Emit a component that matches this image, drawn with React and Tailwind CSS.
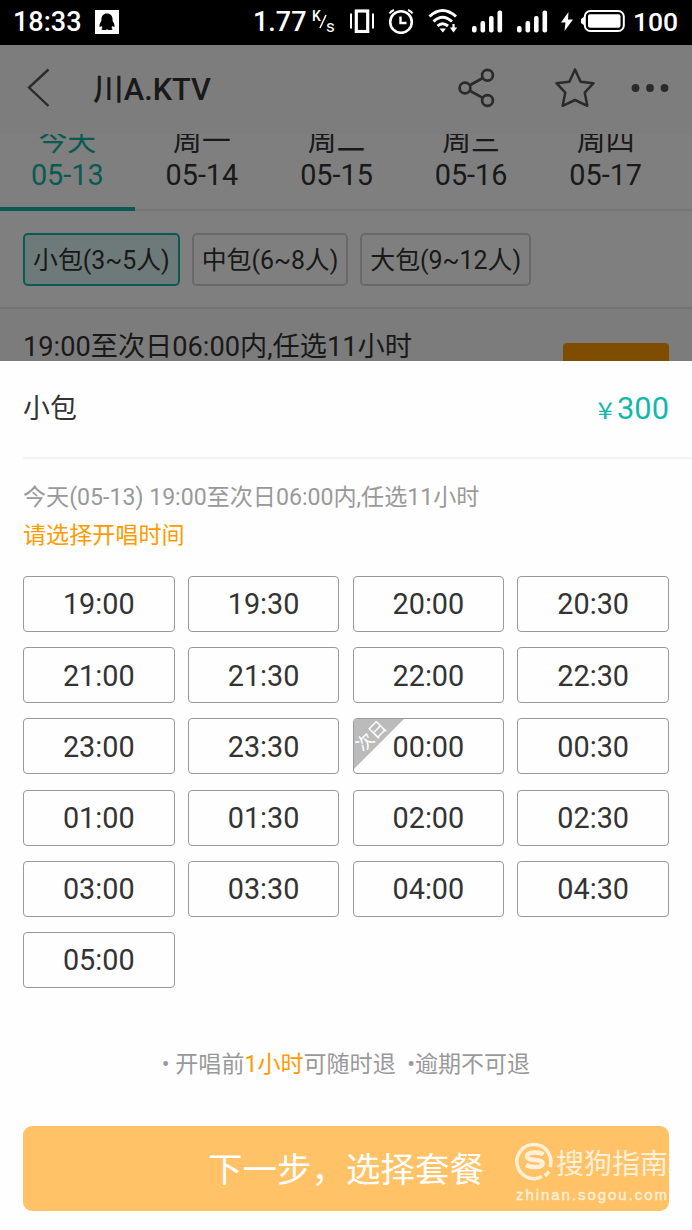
import React, { useState } from 'react';

const DAYS = [
    { label: '今天', date: '05-13' },
    { label: '周一', date: '05-14' },
    { label: '周二', date: '05-15' },
    { label: '周三', date: '05-16' },
    { label: '周四', date: '05-17' }
];

const ROOMS = ['小包(3~5人)', '中包(6~8人)', '大包(9~12人)'];

const SLOTS = [
    '19:00', '19:30', '20:00', '20:30',
    '21:00', '21:30', '22:00', '22:30',
    '23:00', '23:30', '00:00', '00:30',
    '01:00', '01:30', '02:00', '02:30',
    '03:00', '03:30', '04:00', '04:30',
    '05:00'
];

const Signal = ({ className }) => (
    <svg className={className} width="31" height="23" viewBox="0 0 31 23" fill="#fff">
        <rect x="0" y="16" width="4.6" height="6.5" rx="2" />
        <rect x="8.5" y="11" width="4.6" height="11.5" rx="2" />
        <rect x="17" y="6" width="4.6" height="16.5" rx="2" />
        <rect x="25.5" y="0.5" width="4.6" height="22" rx="2" />
    </svg>
);

const StatusBar = () => (
    <div className="flex h-[45px] shrink-0 items-center bg-black pb-[2px] pl-[13px] text-[27px] leading-none font-medium text-white">
        <span className="w-[82px] pt-[2px]">18:33</span>
        <svg width="24" height="24" viewBox="0 0 24 24">
            <rect width="24" height="24" fill="#fff" />
            <path d="M12 3.5c-3.600 0-5.600 2.600-5.600 6v1.500c-1.400 2-2.300 4.200-1.800 6 .8.100 1.300-.700 1.800-1.300.200 1 .7 1.800 1.300 2.400-1.700.500-1.700 2 .3 2 1.500 0 3-.3 4-.9 1 .6 2.500.9 4 .9 2 0 2-1.500.3-2 .6-.6 1.100-1.400 1.300-2.400.5.6 1 1.400 1.800 1.300.5-1.800-.4-4-1.800-6V9.500c0-3.400-2-6-5.600-6z" fill="#000" />
        </svg>
        <span className="ml-[134px] w-[58px] pt-[2px]">1.77</span>
        {/* K/s unit */}
        <div className="relative h-[24px] w-[24px] text-[14px]">
            <span className="absolute -top-px left-[1px]">K</span>
            <span className="absolute top-[8px] left-[15px] text-[17px] font-normal">s</span>
            <svg width="8" height="15" viewBox="0 0 8 15" className="absolute top-[4px] left-[8px]">
                <path d="M1 14L7 1" stroke="#fff" strokeWidth="1.500" />
            </svg>
        </div>
        {/* vibrate */}
        <svg width="24" height="24" viewBox="0 0 24 24" className="ml-[15px] -mt-px" fill="none" stroke="#fff">
            <path d="M1 4.500v15M23 4.500v15" strokeWidth="2" />
            <rect x="6.300" y="2" width="11.400" height="20.500" strokeWidth="3.200" />
        </svg>
        {/* alarm */}
        <svg width="26" height="26" viewBox="0 0 26 26" className="ml-[14px] -mt-[2px]" fill="none" stroke="#fff">
            <circle cx="13" cy="14" r="10.800" strokeWidth="2.600" />
            <path d="M12.500 8.500v6.500h6" strokeWidth="2.400" />
            <path d="M1.500 5.500Q3 3 6 2M24.500 5.500Q23 3 20 2" strokeWidth="2" />
        </svg>
        {/* wifi */}
        <svg width="30" height="25" viewBox="0 0 30 25" className="ml-[14px] -mt-[2px]" fill="none" stroke="#fff" strokeWidth="3">
            <path d="M1.500 8.500Q14.500-3.500 28 8.500M5.500 13.500Q14.500 5 24 13.500M9.500 18Q14.500 13.500 20 18" />
            <path d="M11.500 20.500h6.500L14.800 24.500z" fill="#fff" stroke="none" />
            <path d="M25.500 16v4" strokeWidth="2.200" />
            <path d="M21.800 19.500h7.400L25.500 24.500z" fill="#fff" stroke="none" />
        </svg>
        <Signal className="ml-[14px] -mt-px" />
        <Signal className="ml-[14px] -mt-px" />
        {/* charging */}
        <svg width="12" height="19" viewBox="0 0 12 19" className="ml-[13px] -mt-px" fill="#fff">
            <path d="M7.500 0L0 10.500h4.500L3.500 19 12 7.500H7z" />
        </svg>
        <svg width="44" height="22" viewBox="0 0 44 22" className="ml-[8px] -mt-px">
            <path d="M3.500 6.500L0 9v4l3.500 2.500z" fill="#fff" />
            <rect x="3.800" y="1" width="39" height="20" rx="5.500" fill="none" stroke="#fff" strokeWidth="2" />
            <rect x="7" y="4.300" width="32.500" height="13.400" rx="2" fill="#fff" />
        </svg>
        <span className="ml-[8px] pt-[2px] text-[26.500px]">100</span>
    </div>
);

const Header = () => (
    <div className="flex h-[89px] shrink-0 items-center bg-[#fafafa] pb-[3px] text-[#555]">
        <svg width="24" height="40" viewBox="0 0 24 40" className="ml-[27px]" fill="none" stroke="currentColor" strokeWidth="2.400">
            <path d="M21.500 1.500L2 19.500l19.500 18.500" />
        </svg>
        <h1 className="ml-[42px] w-[365px] pt-[4px] text-[30.750px] leading-none font-medium text-[#333]">川A.KTV</h1>
        <svg width="38" height="40" viewBox="0 0 38 40" fill="none" stroke="currentColor" strokeWidth="2.700">
            <circle cx="7" cy="20" r="5.400" />
            <circle cx="29.500" cy="7.300" r="5.400" />
            <circle cx="29.500" cy="32.500" r="5.400" />
            <path d="M11.800 17.300l13-7.300M11.800 22.700l13 7.200" />
        </svg>
        <svg width="42" height="42" viewBox="0 0 42 42" className="ml-[58px] -mt-px" fill="none" stroke="currentColor" strokeWidth="2.500" strokeLinejoin="round">
            <path d="M21 2.500l5.600 12.200 12.900 1.500-8.800 9.400 2.600 13.200L21 33 8.700 38.800l2.600-13.200L2.500 16.200l12.900-1.500z" />
        </svg>
        <svg width="38" height="10" viewBox="0 0 38 10" className="ml-[35px]" fill="currentColor">
            <circle cx="4.500" cy="5" r="3.900" />
            <circle cx="19" cy="5" r="3.900" />
            <circle cx="33.500" cy="5" r="3.900" />
        </svg>
    </div>
);

const DayTabs = () => (
    <div className="flex h-[77px] shrink-0 items-end overflow-hidden shadow-[inset_0_-2px_#eaeaea]">
        {DAYS.map((day, index) => (
            <div
                key={day.date}
                className={`flex h-[96px] w-[134.600px] shrink-0 flex-col items-center border-b-4 text-[28.800px] leading-[34px] ${index === 0 ? 'border-[#14b4a6] text-[#14b4a6]' : 'border-transparent text-[#333]'}`}
            >
                <span className="mt-[9px] h-[34px]">{day.label}</span>
                <span>{day.date}</span>
            </div>
        ))}
    </div>
);

const BookingPage = () => (
    <div className="relative flex h-[316px] shrink-0 flex-col overflow-hidden bg-white">
        <Header />
        <DayTabs />
        <div className="flex h-[98px] shrink-0 items-center gap-[11.900px] border-b-2 border-[#e6e6e6] pl-[23px]">
            {ROOMS.map((room, index) => (
                <div
                    key={room}
                    className={`flex h-[53px] items-center rounded-[5px] border-2 px-[8px] pt-[3px] text-[24.900px] text-[#333] ${index === 0 ? 'border-[#14b4a6] bg-[#dcf4f2]' : 'border-[#d2d2d2]'}`}
                >
                    {room}
                </div>
            ))}
        </div>
        <div className="flex flex-1 items-start justify-between bg-[#f9f9f9] pr-[23px] pl-[23px]">
            <p className="mt-[20px] text-[27.200px] leading-[36px] whitespace-nowrap text-[#333]">19:00至次日06:00内,任选11小时</p>
            <div className="mt-[34px] h-[60px] w-[106px] rounded-[4px] bg-[#ff9b00]" />
        </div>
        {/* Dim layer behind the sheet */}
        <div className="absolute inset-0 bg-black/50" />
    </div>
);

const TimeSlot = ({ time, active, onSelect }) => (
    <button
        onClick={() => onSelect(time)}
        className={`relative flex h-[56px] items-center justify-center overflow-hidden rounded-[4px] border pt-[2px] text-[28.800px] text-[#333] ${active ? 'border-[#14b4a6]' : 'border-[#999]'}`}
    >
        {time === '00:00' && (
            <span className="absolute -top-px -left-px h-[52px] w-[52px] bg-[#bbb] [clip-path:polygon(0_0,100%_0,0_100%)]">
                <span className="absolute top-[8px] left-[1px] -rotate-45 text-[17.300px] leading-[20px] whitespace-nowrap text-white">次日</span>
            </span>
        )}
        {time}
    </button>
);

const Watermark = () => (
    <div className="absolute top-[16px] right-0 w-[154px] text-[#fff0d9]">
        <div className="flex items-center">
            <svg width="39" height="40" viewBox="0 0 39 40" className="-mt-[4px]" fill="none" stroke="currentColor">
                <path d="M27 35.500A17 17 0 1 1 35 26" strokeWidth="3.500" />
                <path d="M28.500 13.500C25 11 12 10 12 15.500c0 5 15.500 2 15.500 7 0 5-12.500 4-16.500 1.500" strokeWidth="4.500" />
                <path d="M30 35l4-4.500" strokeWidth="3.500" />
            </svg>
            <span className="ml-[2px] pt-[3px] text-[28px] leading-[40px] whitespace-nowrap">搜狗指南</span>
        </div>
        <div className="ml-px text-left font-['Liberation_Sans',sans-serif] text-[15px] leading-[20px] tracking-[1.950px] whitespace-nowrap [-webkit-text-stroke:0.4px_#fff0d9]">zhinan.sogou.com</div>
    </div>
);

const App = () => {
    const [selected, setSelected] = useState(null);

    return (
        <div className="flex h-[1230px] w-[692px] flex-col overflow-hidden bg-white font-[Roboto,'Noto_Sans_CJK_SC',sans-serif]">
            <StatusBar />
            <BookingPage />

            {/* Time sheet */}
            <div className="flex flex-1 flex-col bg-[#fefefe]">
                <div className="ml-[23px] flex h-[98px] items-center justify-between border-b-2 border-[#f3f3f3] pr-[23px]">
                    <h2 className="pt-px text-[26.900px] text-[#333]">小包</h2>
                    <p className="text-[30.800px] text-[#14b8aa]">
                        <span className="mr-[4px] inline-block origin-right scale-x-120 font-['Noto_Sans_CJK_SC',sans-serif] text-[23px] leading-none">¥</span>300
                    </p>
                </div>
                <div className="mt-[20px] px-[23px] text-[23.100px] leading-[38px]">
                    <p className="text-[#999]">今天(05-13) 19:00至次日06:00内,任选11小时</p>
                    <p className="text-[#ff9b00]">请选择开唱时间</p>
                </div>

                <div className="mt-[21px] grid grid-cols-4 gap-x-[13.200px] gap-y-[15.200px] px-[23px]">
                    {SLOTS.map(time => (
                        <TimeSlot key={time} time={time} active={time === selected} onSelect={setSelected} />
                    ))}
                </div>

                <p className="mt-[59px] text-center text-[23.060px] leading-[36px] whitespace-pre text-[#999]">
                    • 开唱前<span className="text-[#ff9b00]">1小时</span>可随时退  •逾期不可退
                </p>

                <button className="relative mx-[23px] mt-[43px] flex h-[85px] items-center justify-center rounded-[9px] bg-[#ffc266] pt-[4px] text-[34.500px] text-white">
                    下一步，选择套餐
                    <Watermark />
                </button>
            </div>
        </div>
    );
};

export default App;
